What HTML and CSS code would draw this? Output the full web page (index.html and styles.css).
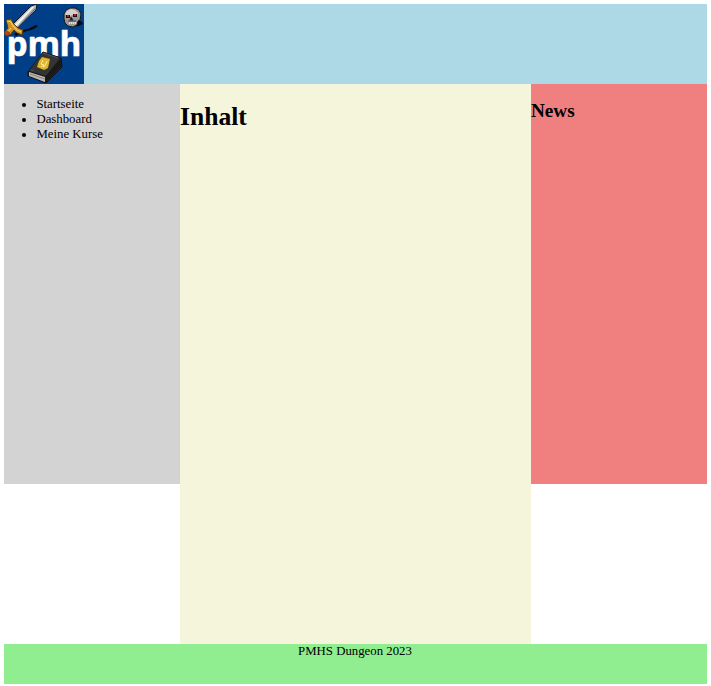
FILE: index.html
```html
<!DOCTYPE html>
<html lang="de">
<head>
<meta charset="utf-8">
<title>PMHS Dungeon</title>
<link rel="stylesheet" href="styles.css">
</head>
<body>
<div class="page">
  <header class="header">
    <svg class="logo" viewBox="4 4 80 80" role="img" aria-label="pmh">
      <rect x="4" y="4" width="80" height="80" fill="#003f87"/>
      <text class="logo-text" x="6.8" y="56" textLength="74.5" lengthAdjust="spacingAndGlyphs">pmh</text>
      <!-- sword -->
      <path d="M14 34l4-3 10-2 8-4 2 1-4 3-10 3-8 4z" fill="#080b12"/>
      <path d="M13 24L31 6l6-2-1 6-19 18z" fill="#aeb2b8" stroke="#15171b"/>
      <path d="M14 25L32 7l3-1-18 20z" fill="#f1f1f1"/>
      <path d="M18 27L35 9" stroke="#62666d" stroke-width="1"/>
      <path d="M6 20l5-1 2 4 5 5 5 2-1 5-5-2-3-3-4 5-4 1-2-3 4-5-1-4z" fill="#cc9224" stroke="#49300b" stroke-width=".8"/>
      <path d="M7 21l4 1 2 4 4 4 4 2M11 28l-3 4" fill="none" stroke="#f4d05c" stroke-width="1.2"/>
      <circle cx="7.5" cy="33.5" r="2" fill="#d93918" stroke="#65370b" stroke-width=".7"/>
      <!-- skull -->
      <path d="M74 23l5-3 3 2 1 2-4 2-8 1z" fill="#080b12"/>
      <path d="M64 14l2-4 4-2h5l4 2 2 4-1 6-2 1-1 4-4 2-5-1-3-3-1-4z" fill="#999" stroke="#16171a"/>
      <path d="M65 14l2-3 4-2 4 1 3 3-1 3-4-1-3 1-4-1z" fill="#d1d1cf"/>
      <path d="M66 15h4v3h-4zM73 14h4v3h-4z" fill="#220c0d"/>
      <path d="M67 16h2M74 15h2" stroke="#f21c22" stroke-width="1.6"/>
      <path d="M71 17l-1 3h3zM68 21h8" fill="#171717" stroke="#242424" stroke-width=".8"/>
      <path d="M69 23h7" stroke="#dedede" stroke-width="2" stroke-dasharray="1.3 .6"/>
      <!-- spellbook -->
      <path d="M28 72l15-20 18 6 1 9-16 16-18-7z" fill="#242424" stroke="#101010"/>
      <path d="M29 71l14-19 17 6-14 18z" fill="#343434"/>
      <path d="M29 71l17 5 14-17 1 7-15 16-17-7z" fill="#191919"/>
      <path d="M29 72l16 5v5l-16-6z" fill="#bcb9b4"/>
      <path d="M30 74l15 5" stroke="#77736e" stroke-width=".8"/>
      <path d="M42 57l8 2-2 9-4 2-7-3 2-6z" fill="#dfb52d"/>
      <path d="M43 60l-2 4 3 1-3 2M47 61l-2 5-2 1" fill="none" stroke="#fff0a0" stroke-width="1"/>
      <path d="M43 53l15 5M31 70l3 1" stroke="#555" stroke-width=".8"/>
    </svg>
  </header>
  <main class="columns">
    <nav class="sidebar">
      <ul class="menu"><li>Startseite</li><li>Dashboard</li><li>Meine Kurse</li></ul>
    </nav>
    <section class="content"><h1>Inhalt</h1></section>
    <aside class="news"><h2>News</h2></aside>
  </main>
  <footer class="footer">PMHS Dungeon 2023</footer>
</div>
</body>
</html>
```
FILE: styles.css
```css
body {
  margin: 4px;
  font: 12.8px/15px "Liberation Serif", "Times New Roman", serif;
  color: #000;
}
.header { height: 80px; background: lightblue; }
.logo { display: block; width: 80px; height: 80px; }
.logo-text { font: bold 34px "Noto Sans", "Open Sans", sans-serif; fill: #fff; stroke: #fff; stroke-width: .6px; }
.columns {
  display: grid;
  grid-template-columns: 176px 351px 176px;
  height: 560px;
  align-items: start;
}
.sidebar { height: 400px; background: lightgray; }
.menu { margin: 12.8px 0; padding-left: 32.4px; }
.content { height: 560px; background: beige; }
.news { height: 400px; background: lightcoral; }
.sidebar, .content, .news { display: flow-root; }
h1 { margin: 18px 0; font-size: 25.6px; line-height: 30px; }
h2 { margin: 16px 0; font-size: 19.2px; line-height: 22px; }
.footer { height: 40px; padding-right: 1px; background: lightgreen; text-align: center; }
```
